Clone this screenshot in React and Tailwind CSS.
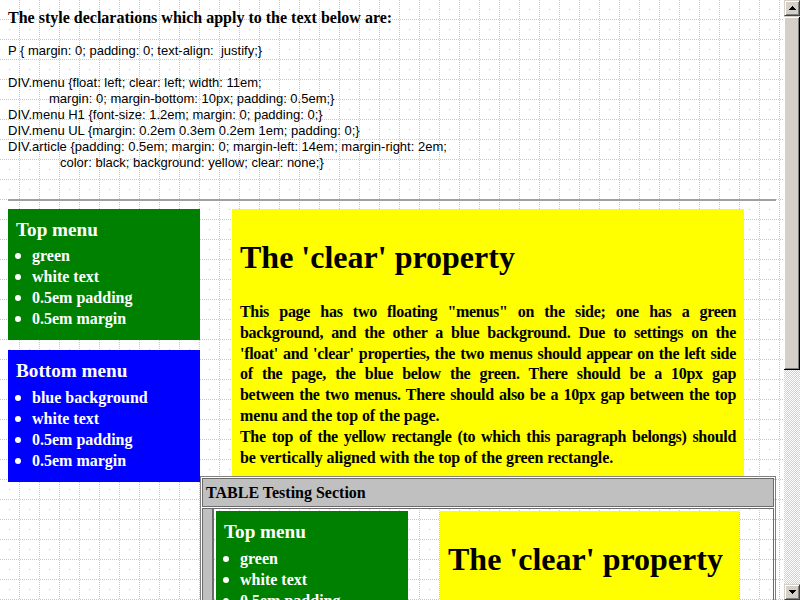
import React from 'react';

const serif = "font-['Liberation_Serif',serif]";
const sans = "font-['Liberation_Sans',sans-serif]";

const greenItems = ['green', 'white text', '0.5em padding', '0.5em margin'];
const blueItems = ['blue background', 'white text', '0.5em padding', '0.5em margin'];

const paragraph = [
  { text: 'This page has two floating "menus" on the side; one has a green', last: false },
  { text: 'background, and the other a blue background. Due to settings on the', last: false },
  { text: "'float' and 'clear' properties, the two menus should appear on the left side", last: false },
  { text: 'of the page, the blue below the green. There should be a 10px gap', last: false },
  { text: 'between the two menus. There should also be a 10px gap between the top', last: false },
  { text: 'menu and the top of the page.', last: true },
  { text: 'The top of the yellow rectangle (to which this paragraph belongs) should', last: false },
  { text: 'be vertically aligned with the top of the green rectangle.', last: true },
];

function GridBackground() {
  const dots = [];
  for (let i = 0; i < 20; i += 2) {
    dots.push(<rect key={'v' + i} x="19" y={i} width="1" height="1" />);
    dots.push(<rect key={'h' + i} x={i} y="19" width="1" height="1" />);
  }
  return (
    <svg className="absolute inset-0" width="784" height="600" shapeRendering="crispEdges">
      <defs>
        <pattern id="grid" width="20" height="20" patternUnits="userSpaceOnUse">
          <g fill="#c8c8c8">
            {dots}
            <rect x="9" y="9" width="1" height="1" />
          </g>
        </pattern>
      </defs>
      <rect width="784" height="600" fill="url(#grid)" />
    </svg>
  );
}

function Menu({ title, items, bg }) {
  return (
    <div className={`float-left clear-left w-[192px] mb-[10px] p-2 text-white ${bg}`}>
      <h1 className="m-0 text-[19.2px] leading-[25px] font-bold">{title}</h1>
      <ul className="mt-[3.2px] mr-[4.8px] mb-[3.2px] ml-4 p-0 list-none">
        {items.map((item) => (
          <li
            key={item}
            className="relative text-base leading-[21px] font-bold before:content-[''] before:absolute before:left-[-17px] before:top-[8px] before:w-[6px] before:h-[6px] before:rounded-full before:bg-white"
          >
            {item}
          </li>
        ))}
      </ul>
    </div>
  );
}

function Article() {
  return (
    <div className="ml-[224px] mr-8 p-2 bg-[#ffff00] text-black">
      <h1 className="mt-[22px] mb-[26px] text-[32px] leading-[37px] font-bold">The 'clear' property</h1>
      <p className="m-0 p-0 text-base leading-[20.8px] font-bold">
        {paragraph.map((line, i) => (
          <span
            key={i}
            className={
              line.last
                ? 'block text-left tracking-[-0.1px]'
                : 'block text-justify [text-align-last:justify] tracking-[-0.3px]'
            }
          >
            {line.text}
          </span>
        ))}
      </p>
    </div>
  );
}

function Content() {
  return (
    <>
      <Menu title="Top menu" items={greenItems} bg="bg-[#008000]" />
      <Menu title="Bottom menu" items={blueItems} bg="bg-[#0000ff]" />
      <Article />
    </>
  );
}

function ScrollButton({ down }) {
  return (
    <div className="w-4 h-4 bg-[#d4d0c8] border-t border-l border-t-[#d4d0c8] border-l-[#d4d0c8] border-r border-b border-r-[#404040] border-b-[#404040] shadow-[inset_1px_1px_#ffffff,inset_-1px_-1px_#808080] flex items-center justify-center">
      <svg width="7" height="4" viewBox="0 0 7 4" shapeRendering="crispEdges">
        {down ? <polygon points="0,0 7,0 3.5,4" fill="#000" /> : <polygon points="3.5,0 7,4 0,4" fill="#000" />}
      </svg>
    </div>
  );
}

function Scrollbar() {
  return (
    <div className="w-4 h-[600px] flex flex-col bg-[#d4d0c8]">
      <ScrollButton />
      <div className="h-[353px] mt-px bg-[#d4d0c8] border-r border-b border-r-[#000000] border-b-[#000000] shadow-[inset_1px_1px_#ffffff,inset_-1px_-1px_#808080]" />
      <div className="flex-1 bg-[repeating-conic-gradient(#d4d0c8_0_25%,#ffffff_0_50%)] bg-[length:2px_2px]" />
      <ScrollButton down />
    </div>
  );
}

export default function App() {
  return (
    <div className="w-[800px] h-[600px] overflow-hidden flex bg-white">
      <div className="relative w-[784px] h-[600px] overflow-hidden">
        <GridBackground />
        <div className="relative px-2 pt-2 text-black">
          <h3 className={`${serif} text-base leading-[20px] font-bold`}>
            The style declarations which apply to the text below are:
          </h3>
          <pre className={`${sans} mt-[15px] text-[13px] leading-[16px] whitespace-pre`}>
            {'P { margin: 0; padding: 0; text-align:  justify;}\n\nDIV.menu {float: left; clear: left; width: 11em;\n'}
            <span className="pl-[41px]">margin: 0; margin-bottom: 10px; padding: 0.5em;{'}'}</span>
            {'\nDIV.menu H1 {font-size: 1.2em; margin: 0; padding: 0;}\nDIV.menu UL {margin: 0.2em 0.3em 0.2em 1em; padding: 0;}\nDIV.article {padding: 0.5em; margin: 0; margin-left: 14em; margin-right: 2em;\n'}
            <span className="pl-[52px]">color: black; background: yellow; clear: none;{'}'}</span>
          </pre>
          <hr className="mt-[28px] border-0 border-t-2 border-t-[#a0a0a0]" />
          <div className={`${serif} mt-2`}>
            <Content />
            <div className="flow-root border border-[#808080] bg-transparent">
              <div className="h-[29px] m-px border border-[#6b6b6b] bg-[#c0c0c0] px-[3px] flex items-center text-base font-bold">
                TABLE Testing Section
              </div>
              <div className="flex mx-px">
                <div className="w-[11px] bg-[#c0c0c0] border border-[#6b6b6b]" />
                <div className="flex-1 flow-root border border-[#6b6b6b] p-[2px] h-[200px]">
                  <Content />
                </div>
              </div>
            </div>
          </div>
        </div>
      </div>
      <Scrollbar />
    </div>
  );
}
